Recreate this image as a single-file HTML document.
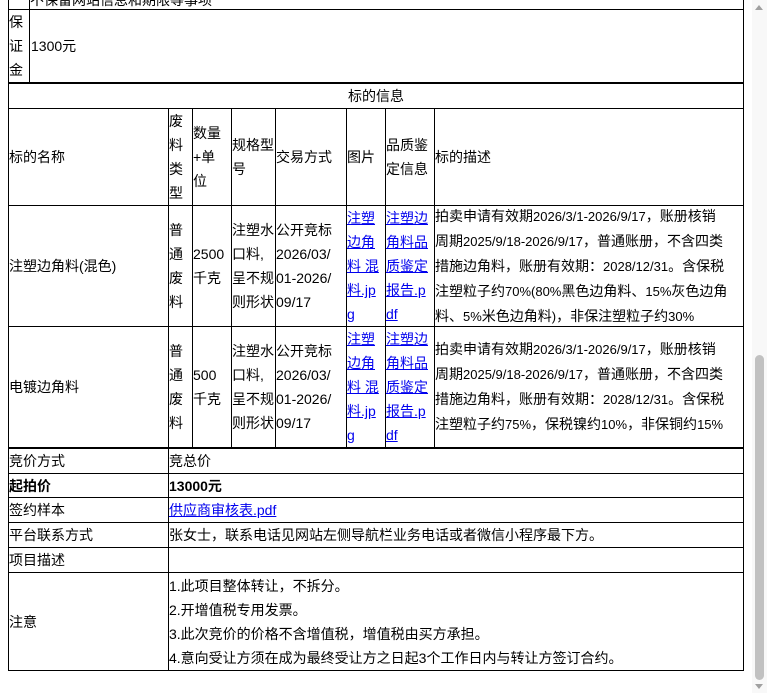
<!DOCTYPE html>
<html><head><meta charset="utf-8"><style>
body{margin:0;width:767px;height:693px;overflow:hidden;background:#fff;position:relative;font-family:"Liberation Sans","Noto Sans CJK SC",sans-serif;font-size:14px;color:#000}
.c{position:absolute;box-sizing:border-box;border:1px solid #000;display:flex;align-items:center;padding-left:0;line-height:24px;white-space:nowrap;overflow:hidden}
.h{position:absolute;background:#000}
a{color:#00e;text-decoration:underline}
b{font-weight:bold}
.n{font-size:13px}
</style></head><body>
<div class="c" style="left:8px;top:-20px;width:22px;height:30px"></div>
<div class="c" style="left:29px;top:-20px;width:715px;height:30px;align-items:flex-end;line-height:14px"><span style="position:relative;top:-2px">不保留网站信息和期限等事项</span></div>
<div class="c" style="left:8px;top:9px;width:22px;height:74px;flex-direction:column;justify-content:center;align-items:flex-start"><span>保</span><span>证</span><span>金</span></div>
<div class="c" style="left:29px;top:9px;width:715px;height:74px;padding-left:1px">1300元</div>
<div class="h" style="left:8px;top:82px;width:736px;height:2px"></div>
<div class="c" style="left:8px;top:83px;width:736px;height:26px;justify-content:center">标的信息</div>
<div class="c" style="left:8px;top:108px;width:161px;height:98px">标的名称</div>
<div class="c" style="left:168px;top:108px;width:25px;height:98px"><div>废<br>料<br>类<br>型</div></div>
<div class="c" style="left:192px;top:108px;width:40px;height:98px"><div>数量<br>+单<br>位</div></div>
<div class="c" style="left:231px;top:108px;width:45px;height:98px"><div>规格型<br>号</div></div>
<div class="c" style="left:275px;top:108px;width:72px;height:98px">交易方式</div>
<div class="c" style="left:346px;top:108px;width:40px;height:98px">图片</div>
<div class="c" style="left:385px;top:108px;width:50px;height:98px"><div>品质鉴<br>定信息</div></div>
<div class="c" style="left:434px;top:108px;width:310px;height:98px">标的描述</div>
<div class="c" style="left:8px;top:205px;width:161px;height:122px">注塑边角料(混色)</div>
<div class="c" style="left:168px;top:205px;width:25px;height:122px"><div>普<br>通<br>废<br>料</div></div>
<div class="c" style="left:192px;top:205px;width:40px;height:122px"><div>2500<br>千克</div></div>
<div class="c" style="left:231px;top:205px;width:45px;height:122px"><div>注塑水<br>口料,<br>呈不规<br>则形状</div></div>
<div class="c" style="left:275px;top:205px;width:72px;height:122px"><div>公开竞标<br>2026/03/<br>01-2026/<br>09/17</div></div>
<div class="c" style="left:346px;top:205px;width:40px;height:122px"><div><a>注塑<br>边角<br>料 混<br>料.jp<br>g</a></div></div>
<div class="c" style="left:385px;top:205px;width:50px;height:122px"><div><a>注塑边<br>角料品<br>质鉴定<br>报告.p<br>df</a></div></div>
<div class="c" style="left:434px;top:205px;width:310px;height:122px"><div>拍卖申请有效期<span class="n">2026/3/1-2026/9/17</span>，账册核销<br>周期<span class="n">2025/9/18-2026/9/17</span>，普通账册，不含四类<br>措施边角料，账册有效期：<span class="n">2028/12/31</span>。含保税<br>注塑粒子约<span class="n">70%(80%</span>黑色边角料、<span class="n">15%</span>灰色边角<br>料、<span class="n">5%</span>米色边角料<span class="n">)</span>，非保注塑粒子约<span class="n">30%</span></div></div>
<div class="c" style="left:8px;top:326px;width:161px;height:122px">电镀边角料</div>
<div class="c" style="left:168px;top:326px;width:25px;height:122px"><div>普<br>通<br>废<br>料</div></div>
<div class="c" style="left:192px;top:326px;width:40px;height:122px"><div>500<br>千克</div></div>
<div class="c" style="left:231px;top:326px;width:45px;height:122px"><div>注塑水<br>口料,<br>呈不规<br>则形状</div></div>
<div class="c" style="left:275px;top:326px;width:72px;height:122px"><div>公开竞标<br>2026/03/<br>01-2026/<br>09/17</div></div>
<div class="c" style="left:346px;top:326px;width:40px;height:122px"><div><a>注塑<br>边角<br>料 混<br>料.jp<br>g</a></div></div>
<div class="c" style="left:385px;top:326px;width:50px;height:122px"><div><a>注塑边<br>角料品<br>质鉴定<br>报告.p<br>df</a></div></div>
<div class="c" style="left:434px;top:326px;width:310px;height:122px"><div>拍卖申请有效期<span class="n">2026/3/1-2026/9/17</span>，账册核销<br>周期<span class="n">2025/9/18-2026/9/17</span>，普通账册，不含四类<br>措施边角料，账册有效期：<span class="n">2028/12/31</span>。含保税<br>注塑粒子约<span class="n">75%</span>，保税镍约<span class="n">10%</span>，非保铜约<span class="n">15%</span></div></div>
<div class="h" style="left:8px;top:447px;width:736px;height:2px"></div>
<div class="c" style="left:8px;top:448px;width:161px;height:26px">竞价方式</div>
<div class="c" style="left:168px;top:448px;width:576px;height:26px">竞总价</div>
<div class="c" style="left:8px;top:473px;width:161px;height:25px"><b>起拍价</b></div>
<div class="c" style="left:168px;top:473px;width:576px;height:25px"><b>13000元</b></div>
<div class="c" style="left:8px;top:497px;width:161px;height:26px">签约样本</div>
<div class="c" style="left:168px;top:497px;width:576px;height:26px"><a>供应商审核表.pdf</a></div>
<div class="c" style="left:8px;top:522px;width:161px;height:26px">平台联系方式</div>
<div class="c" style="left:168px;top:522px;width:576px;height:26px">张女士，联系电话见网站左侧导航栏业务电话或者微信小程序最下方。</div>
<div class="c" style="left:8px;top:547px;width:161px;height:26px">项目描述</div>
<div class="c" style="left:168px;top:547px;width:576px;height:26px"></div>
<div class="c" style="left:8px;top:572px;width:161px;height:99px">注意</div>
<div class="c" style="left:168px;top:572px;width:576px;height:99px"><div>1.此项目整体转让，不拆分。<br>2.开增值税专用发票。<br>3.此次竞价的价格不含增值税，增值税由买方承担。<br>4.意向受让方须在成为最终受让方之日起3个工作日内与转让方签订合约。</div></div>
<div style="position:absolute;left:752px;top:0;width:15px;height:693px;background:#f8f8f8"></div>
<div style="position:absolute;left:755px;top:355px;width:9px;height:325px;background:#c1c1c1;border-radius:5px"></div>
<div style="position:absolute;left:755px;top:5px;width:0;height:0;border-left:4px solid transparent;border-right:4px solid transparent;border-bottom:5px solid #a0a0a0"></div>
<div style="position:absolute;left:755px;top:684px;width:0;height:0;border-left:4px solid transparent;border-right:4px solid transparent;border-top:5px solid #a0a0a0"></div>
</body></html>
